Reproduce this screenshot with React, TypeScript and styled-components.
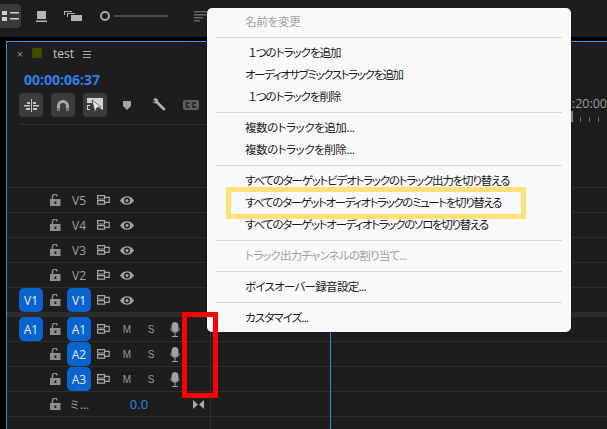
import React from 'react';
import styled, { createGlobalStyle } from 'styled-components';

const Global = createGlobalStyle`
  html, body {
    margin: 0;
    padding: 0;
    background: #000;
    overflow: hidden;
  }
  body {
    font-family: "Liberation Sans", "Noto Sans CJK JP", sans-serif;
  }
`;

const Page = styled.div`
  position: relative;
  width: 607px;
  height: 429px;
  overflow: hidden;
  background: #000;
  display: flex;
  flex-direction: column;
`;

const Toolbar = styled.div`
  height: 37px;
  background: #1d1d1d;
  display: flex;
  align-items: flex-start;
  flex-shrink: 0;
  padding-top: 4px;
  box-sizing: border-box;
  color: #b4b4b4;
`;

const ToolButton = styled.div<{ $on?: boolean }>`
  width: 21px;
  height: 24px;
  border-radius: 0 4px 4px 0;
  background: ${p => (p.$on ? '#3a3a3a' : 'transparent')};
  display: flex;
  align-items: center;
  justify-content: center;
`;

const ToolIcon = styled.div`
  margin-left: 10px;
  width: 21px;
  height: 24px;
  display: flex;
  align-items: center;
  justify-content: center;
`;

const SliderKnob = styled.div`
  width: 6px;
  height: 6px;
  border: 2px solid #a8a8a8;
  border-radius: 50%;
  margin: 7px 0 0 17px;
`;

const SliderLine = styled.div`
  width: 54px;
  height: 2px;
  background: #4c4c4c;
  margin: 11px 12px 0 4px;
`;

const Panel = styled.div`
  margin: 4px 0 0 6px;
  flex: 1;
  background: #1d1d1d;
  border-top: 1px solid #3f8fe0;
  border-left: 1px solid #3f8fe0;
  display: flex;
  min-height: 0;
  overflow: hidden;
`;

const HeaderColumn = styled.div`
  width: 203px;
  flex-shrink: 0;
  border-right: 1px solid #2e2e2e;
  display: flex;
  flex-direction: column;

  > * {
    flex-shrink: 0;
  }
`;

const TimelineColumn = styled.div`
  flex: 1;
  display: flex;
  flex-direction: column;
  position: relative;

  > * {
    flex-shrink: 0;
  }
`;

const Tab = styled.div`
  height: 24px;
  padding-left: 10px;
  display: flex;
  align-items: center;
  color: #c4c4c4;
  font-size: 12px;
`;

const Close = styled.span`
  font-size: 10px;
  color: #9a9a9a;
  width: 15px;
`;

const Swatch = styled.span`
  width: 10px;
  height: 10px;
  background: #3c4a00;
  margin-right: 11px;
  margin-top: -3px;
`;

const TabName = styled.span`
  font-family: "Open Sans", sans-serif;
  font-size: 12px;
  color: #c8c8c8;
  margin-right: 9px;
  margin-top: -1px;
`;

const Timecode = styled.div`
  height: 26px;
  margin-bottom: 1px;
  padding-left: 17px;
  display: flex;
  align-items: center;
  color: #2f80ed;
  font-size: 14px;
  font-weight: 700;
  font-family: "Open Sans", sans-serif;
`;

const ControlRow = styled.div`
  height: 24px;
  padding-left: 12px;
  display: flex;
  gap: 8px;
  align-items: center;
`;

const ControlButton = styled.div<{ $plain?: boolean }>`
  width: 24px;
  height: 24px;
  border-radius: 4px;
  background: ${p => (p.$plain ? 'transparent' : '#3c3c3c')};
  color: #b0b0b0;
  display: flex;
  align-items: center;
  justify-content: center;
`;

const ControlRule = styled.div`
  height: 1px;
  background: #2e2e2e;
  margin: 7px 0 0 12px;
`;

const Spacer = styled.div`
  height: 62px;
`;

const Row = styled.div`
  height: 24px;
  border-top: 1px solid #2e2e2e;
  display: grid;
  grid-template-columns: 12px 24px 1fr;
  align-items: center;
`;

const Cells = styled.div`
  display: grid;
  grid-template-columns: repeat(7, 24px);
  align-items: center;
  justify-items: center;
  grid-column: 3;
`;

const Patch = styled.div<{ $on?: boolean }>`
  width: 24px;
  height: 24px;
  border-radius: 5px;
  background: ${p => (p.$on ? '#0b63ce' : 'transparent')};
  color: ${p => (p.$on ? '#e4f0ff' : '#9aa5ad')};
  font-size: 12px;
  font-family: "Open Sans", sans-serif;
  display: flex;
  align-items: center;
  justify-content: center;
`;

const Mark = styled.span`
  color: #9a9a9a;
  font-size: 10px;
  font-family: "Liberation Sans", sans-serif;
`;

const Divider = styled.div`
  height: 4px;
  background: #2c2c2c;
`;

const MixName = styled.span`
  color: #a8a8a8;
  font-size: 11px;
  font-family: "Noto Sans CJK JP", sans-serif;
  white-space: nowrap;
`;

const MixValue = styled.span`
  color: #2f80ed;
  font-size: 13px;
  font-family: "Open Sans", sans-serif;
  grid-column: 4 / span 2;
`;

const MixBalance = styled.span`
  grid-column: 7;
  display: flex;
  margin-right: 2px;
`;

const Ruler = styled.div`
  height: 145px;
  padding-top: 55px;
  box-sizing: border-box;
  display: flex;
  flex-direction: column;
  align-items: flex-end;
`;

const RulerLabel = styled.div`
  font-family: "Open Sans", sans-serif;
  font-size: 12.5px;
  color: #9c9c9c;
  line-height: 14px;
  white-space: nowrap;
`;

const Ticks = styled.div`
  display: flex;
  gap: 8px;
  height: 11px;
  align-items: flex-end;
  width: 36px;
`;

const Tick = styled.span<{ $major?: boolean }>`
  width: ${p => (p.$major ? 2 : 1)}px;
  margin-right: ${p => (p.$major ? -1 : 0)}px;
  height: ${p => (p.$major ? 11 : 5)}px;
  background: ${p => (p.$major ? '#8a8a8a' : '#6e6e6e')};
`;

const Lane = styled.div`
  height: 24px;
  border-top: 1px solid #2e2e2e;
`;

const Playhead = styled.div`
  position: absolute;
  left: 119px;
  top: 0;
  bottom: 0;
  width: 1px;
  background: #3b86e0;
`;

const Menu = styled.div`
  position: absolute;
  left: 207px;
  top: 8px;
  width: 364px;
  height: 324px;
  box-sizing: border-box;
  background: #f9f9f9;
  border-radius: 5px;
  padding: 2px 9px 0;
  box-shadow: 0 0 2px rgba(0, 0, 0, 0.5);
`;

const MenuItem = styled.div<{ $off?: boolean; $track: number; $indent?: boolean }>`
  height: 22px;
  line-height: 22px;
  padding-left: ${p => (p.$indent ? 32 : 29)}px;
  font-size: 11.5px;
  letter-spacing: ${p => p.$track}px;
  font-family: "Noto Sans CJK JP", sans-serif;
  font-feature-settings: "palt";
  white-space: nowrap;
  color: ${p => (p.$off ? '#a2a2a2' : '#1a1a1a')};
`;

const MenuRule = styled.div`
  height: 1px;
  background: #d9d9d9;
  margin: 5px 0 3px;
`;

const Highlight = styled.div`
  position: absolute;
  left: 226px;
  top: 187px;
  width: 290px;
  height: 22px;
  border: 5px solid #ffe07a;
`;

const RedBox = styled.div`
  position: absolute;
  left: 182px;
  top: 312px;
  width: 36px;
  height: 86px;
  border: 5px solid #fe0000;
  box-sizing: border-box;
`;

const Lock = () => (
  <svg width="11" height="12" viewBox="0 0 11 12" fill="#8e8e8e">
    <path d="M0 5h10.500v7H0z" />
    <path d="M2.500 5V2.800a2.300 2.300 0 0 1 4.600-.4" fill="none" stroke="#8e8e8e" strokeWidth="1.500" />
    <path d="M4.500 7.500h1.800v2.500H4.500z" fill="#1d1d1d" />
  </svg>
);

const Toggle = () => (
  <svg width="13" height="10" viewBox="0 0 13 10" fill="none" stroke="#a8a8a8" strokeWidth="1.200">
    <path d="M.6.6h7v3.400h-7zM.6 5.600h7v3.600h-7zM8 2.400h4.200v5H8" />
  </svg>
);

const Eye = () => (
  <svg width="14" height="9" viewBox="0 0 14 9">
    <path d="M0 4.500C3 -1.200 11 -1.200 14 4.500 11 10.200 3 10.200 0 4.500z" fill="#a2a2a2" />
    <circle cx="7" cy="4.500" r="3" fill="#1d1d1d" />
    <circle cx="7" cy="4.500" r="1.600" fill="#a2a2a2" />
  </svg>
);

const Mic = () => (
  <svg width="10" height="15" viewBox="0 0 10 15" fill="none" stroke="#a2a2a2" strokeWidth="1">
    <rect x="2" y="0.500" width="6" height="9" rx="3" fill="#a2a2a2" />
    <path d="M.7 6.500c0 5 8.600 5 8.600 0M5 11v3M2 14.500h6" />
  </svg>
);

const videoTracks = ['V5', 'V4', 'V3', 'V2', 'V1'];
const audioTracks = ['A1', 'A2', 'A3'];

type Entry = { t: string; track: number; off?: boolean; indent?: boolean };

const menu: (Entry | null)[] = [
  { t: '名前を変更', track: -0.2, off: true },
  null,
  { t: '１つのトラックを追加', track: -1, indent: true },
  { t: 'オーディオサブミックストラックを追加', track: -1.4 },
  { t: '１つのトラックを削除', track: -1, indent: true },
  null,
  { t: '複数のトラックを追加...', track: -0.45 },
  { t: '複数のトラックを削除...', track: -0.45 },
  null,
  { t: 'すべてのターゲットビデオトラックのトラック出力を切り替える', track: -1.2 },
  { t: 'すべてのターゲットオーディオトラックのミュートを切り替える', track: -1.4 },
  { t: 'すべてのターゲットオーディオトラックのソロを切り替える', track: -1.3 },
  null,
  { t: 'トラック出力チャンネルの割り当て...', track: -0.8, off: true },
  null,
  { t: 'ボイスオーバー録音設定...', track: -0.7 },
  null,
  { t: 'カスタマイズ...', track: -0.9 },
];

export default function App() {
  return (
    <Page>
      <Global />
      <Toolbar>
        <ToolButton $on>
          <svg width="17" height="10" viewBox="0 0 17 10" fill="#cfcfcf">
            <path d="M0 0h5v4H0zM0 6h5v4H0zM8 1h9v1.400H8zM8 7h9v1.400H8z" />
          </svg>
        </ToolButton>
        <ToolIcon>
          <svg width="11" height="11" viewBox="0 0 11 11" fill="#b4b4b4">
            <path d="M1 0h9v8H1zM0 9.600h11V11H0z" />
          </svg>
        </ToolIcon>
        <ToolIcon>
          <svg width="18" height="10" viewBox="0 0 18 10" fill="#b4b4b4">
            <path d="M0 0h8v1H1v3H0zM3 2h8v1H4v3H3zM7 4h11v6H7z" />
          </svg>
        </ToolIcon>
        <SliderKnob />
        <SliderLine />
        <ToolIcon>
          <svg width="13" height="11" viewBox="0 0 13 11" fill="#666">
            <path d="M0 0h13v1.400H0zM0 3h13v1.400H0zM0 6h9v1.400H0zM0 9h6v1.400H0z" />
          </svg>
        </ToolIcon>
      </Toolbar>
      <Panel>
        <HeaderColumn>
          <Tab>
            <Close>×</Close>
            <Swatch />
            <TabName>test</TabName>
            <svg width="8" height="7" viewBox="0 0 8 7" fill="#a8a8a8">
              <path d="M0 0h8v1H0zM0 3h8v1H0zM0 6h8v1H0z" />
            </svg>
          </Tab>
          <Timecode>00:00:06:37</Timecode>
          <ControlRow>
            <ControlButton>
              <svg width="15" height="13" viewBox="0 0 15 13" fill="#c4c4c4">
                <path d="M7 0h1v13H7zM3 3h3v2H3zM9 3h3v2H9zM0 6h6v1.400H0zM9 6h6v1.400H9zM2 9h4v2H2zM9 9h4v2H9z" />
              </svg>
            </ControlButton>
            <ControlButton>
              <svg width="12" height="11" viewBox="0 0 12 11" fill="none">
                <path d="M1.500 11V6a4.500 4.500 0 0 1 9 0v5" stroke="#a8a8a8" strokeWidth="3" />
                <path d="M0 8h3v3H0zM9 8h3v3H9z" fill="#7a7a7a" />
              </svg>
            </ControlButton>
            <ControlButton>
              <svg width="16" height="15" viewBox="0 0 16 15" fill="#d4d4d4">
                <path d="M0 0h16v12l-5-3L5 1v4H0z" />
                <path d="M5 2l9 7-4 .500L8 14z" fill="#e6e6e6" stroke="#3c3c3c" strokeWidth=".6" />
                <path d="M0 7h3v1H1v3h2v1H0z" />
              </svg>
            </ControlButton>
            <ControlButton $plain>
              <svg width="8" height="9" viewBox="0 0 8 9" fill="#a4a4a4">
                <path d="M0 0h8v5L4 9 0 5z" />
              </svg>
            </ControlButton>
            <ControlButton $plain>
              <svg width="14" height="14" viewBox="0 0 14 14" fill="#b0b0b0">
                <path d="M1 1.500 3 .2C5 0 6.600 1.600 6.200 3.600l7 7c.8 1 -.8 2.600-1.800 1.800l-7-7C2.400 5.800.6 4.400 .4 3l2 1.400 1-1z" />
              </svg>
            </ControlButton>
            <ControlButton $plain>
              <svg width="16" height="10" viewBox="0 0 16 10">
                <rect width="16" height="10" rx="2" fill="#5e5e5e" />
                <path d="M6.500 3H3.500v4h3M13 3h-3v4h3" fill="none" stroke="#1d1d1d" strokeWidth="1.300" />
              </svg>
            </ControlButton>
          </ControlRow>
          <ControlRule />
          <Spacer />
          {videoTracks.map(v => (
            <Row key={v}>
              <span />
              <Patch $on={v === 'V1'}>{v === 'V1' ? 'V1' : ''}</Patch>
              <Cells>
                <Lock />
                <Patch $on={v === 'V1'}>{v}</Patch>
                <Toggle />
                <Eye />
              </Cells>
            </Row>
          ))}
          <Divider />
          {audioTracks.map(a => (
            <Row key={a}>
              <span />
              <Patch $on={a === 'A1'}>{a === 'A1' ? 'A1' : ''}</Patch>
              <Cells>
                <Lock />
                <Patch $on>{a}</Patch>
                <Toggle />
                <Mark>M</Mark>
                <Mark>S</Mark>
                <Mic />
              </Cells>
            </Row>
          ))}
          <Row>
            <span />
            <span />
            <Cells>
              <Lock />
              <MixName>ミ...</MixName>
              <MixValue>0.0</MixValue>
              <MixBalance>
                <svg width="11" height="9" viewBox="0 0 11 9" fill="#a8a8a8">
                  <path d="M0 0l5 4.500L0 9zM11 0L6 4.500 11 9z" />
                </svg>
              </MixBalance>
            </Cells>
          </Row>
          <Lane />
        </HeaderColumn>
        <TimelineColumn>
          <Ruler>
            <RulerLabel>:20:00</RulerLabel>
            <Ticks>
              <Tick $major />
              <Tick />
              <Tick />
              <Tick />
            </Ticks>
          </Ruler>
          {videoTracks.map(v => (
            <Lane key={v} />
          ))}
          <Divider />
          {audioTracks.map(a => (
            <Lane key={a} />
          ))}
          <Lane />
          <Lane />
          <Playhead />
        </TimelineColumn>
      </Panel>
      <Menu>
        {menu.map((m, i) =>
          m === null ? (
            <MenuRule key={i} />
          ) : (
            <MenuItem key={i} $off={m.off} $track={m.track} $indent={m.indent}>
              {m.t}
            </MenuItem>
          ),
        )}
      </Menu>
      <Highlight />
      <RedBox />
    </Page>
  );
}
